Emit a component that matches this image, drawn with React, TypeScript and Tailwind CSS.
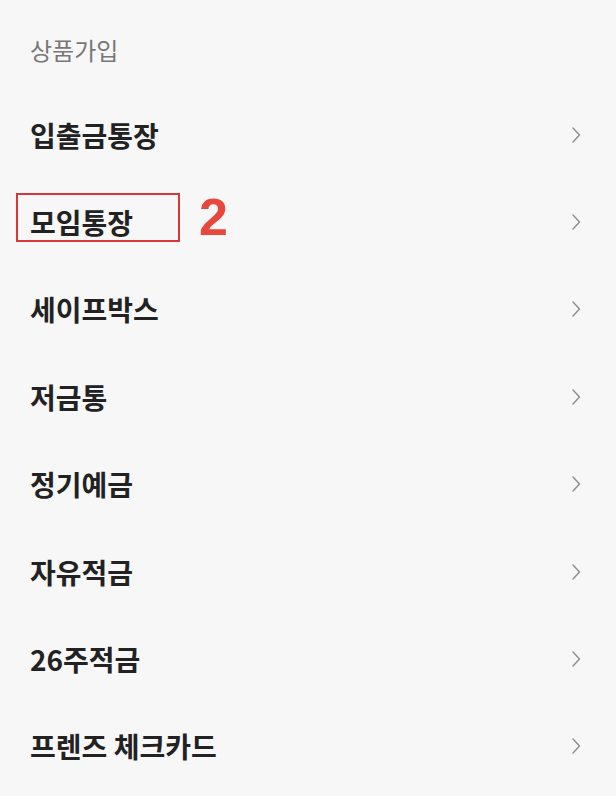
const items = [
  "입출금통장",
  "모임통장",
  "세이프박스",
  "저금통",
  "정기예금",
  "자유적금",
  "26주적금",
  "프렌즈 체크카드",
];

function Chevron() {
  return (
    <svg width="10" height="18" viewBox="0 0 10 18" fill="none" className="shrink-0">
      <path d="M2 2 L8.5 9 L2 16" stroke="#8c8c8c" strokeWidth="1.4" strokeLinecap="round" strokeLinejoin="round" />
    </svg>
  );
}

export default function App() {
  return (
    <div
      className="w-[616px] h-[796px] bg-[#f7f7f7] overflow-hidden"
      style={{ fontFamily: '"Noto Sans CJK KR", "Noto Sans", sans-serif' }}
    >
      <div className="h-[91px] pt-[34px] pl-[30px]">
        <p className="text-[24px] leading-[32px] text-[#777777]">상품가입</p>
      </div>
      <ul>
        {items.map((name, i) => (
          <li key={name} className="relative h-[87.4px] flex items-center justify-between pl-[30px] pr-[35px]">
            <span className="text-[28px] leading-[36px] font-bold text-[#222222]">{name}</span>
            <Chevron />
            {i === 1 && (
              <>
                <div className="absolute left-[16px] top-[15px] w-[164px] h-[49px] border-2 border-[#d9363a]" />
                <span
                  className="absolute left-[199px] top-[9px] text-[52px] leading-[60px] font-bold text-[#e8483b]"
                  style={{ fontFamily: '"Liberation Sans", Arial, sans-serif' }}
                >
                  2
                </span>
              </>
            )}
          </li>
        ))}
      </ul>
    </div>
  );
}
